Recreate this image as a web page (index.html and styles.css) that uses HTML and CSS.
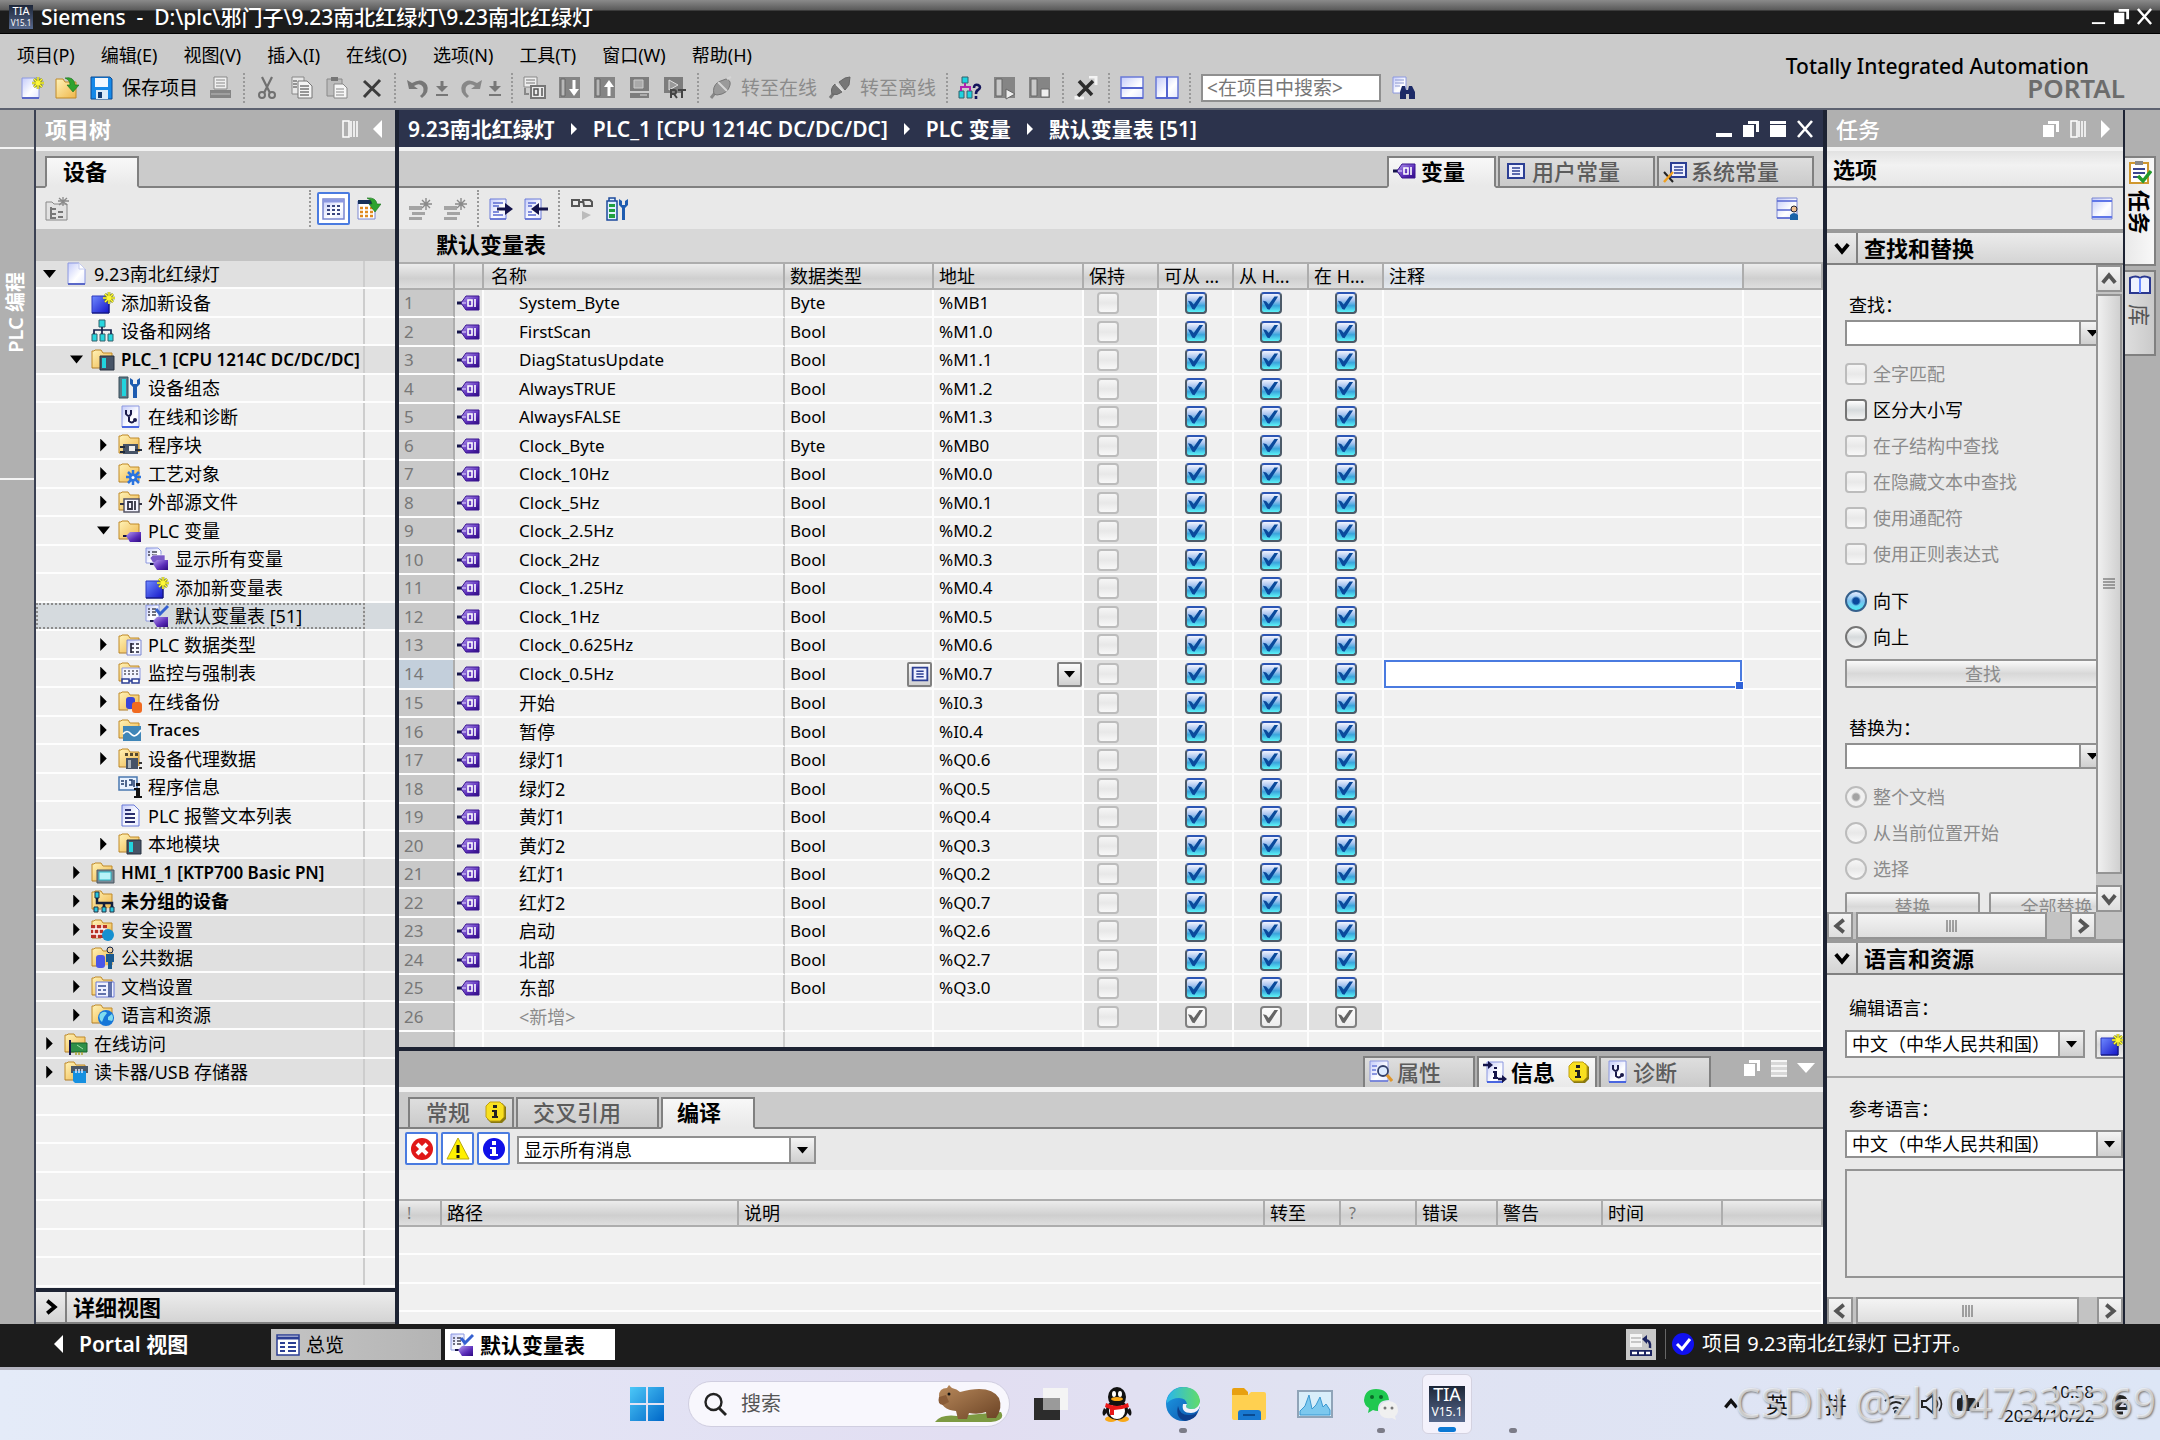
FILE: index.html
```html
<!DOCTYPE html>
<html lang="zh-CN">
<head>
<meta charset="utf-8">
<title>Siemens - 9.23南北红绿灯</title>
<link rel="stylesheet" href="styles.css">
</head>
<body>
<svg class="defs" width="0" height="0" aria-hidden="true">
  <defs>
    <linearGradient id="g-fold" x1="0" y1="0" x2="1" y2="1"><stop offset="0" stop-color="#fff3b8"/><stop offset="1" stop-color="#efb64a"/></linearGradient>
    <linearGradient id="g-page" x1="0" y1="0" x2="1" y2="1"><stop offset="0" stop-color="#c4cbfa"/><stop offset=".6" stop-color="#fff"/><stop offset="1" stop-color="#e4e8ff"/></linearGradient>
    <linearGradient id="g-blue" x1="0" y1="0" x2="1" y2="1"><stop offset="0" stop-color="#6f8bff"/><stop offset="1" stop-color="#1414c8"/></linearGradient>
    <linearGradient id="g-tag" x1="0" y1="0" x2="1" y2="1"><stop offset="0" stop-color="#b49af0"/><stop offset=".6" stop-color="#5a2cb8"/><stop offset="1" stop-color="#2d0a80"/></linearGradient>
    <linearGradient id="g-edge" x1="0" y1="0" x2="1" y2="1"><stop offset="0" stop-color="#1fa0e8"/><stop offset="1" stop-color="#0b4fa8"/></linearGradient>
    <linearGradient id="g-edge2" x1="0" y1="0" x2="1" y2="0"><stop offset="0" stop-color="#2ab6ea"/><stop offset="1" stop-color="#62dc6a"/></linearGradient>
    <linearGradient id="g-win" x1="0" y1="0" x2="1" y2="1"><stop offset="0" stop-color="#4cc8f8"/><stop offset="1" stop-color="#0067c8"/></linearGradient>
    <linearGradient id="g-bear" x1="0" y1="0" x2="1" y2="1"><stop offset="0" stop-color="#b98a5c"/><stop offset="1" stop-color="#6b4325"/></linearGradient>
  </defs>
  <symbol id="i-folder" viewBox="0 0 24 24"><path d="M1 20V3h2l1-1h6l2 3h9v14" fill="url(#g-fold)" stroke="#c08a28"/><path d="M1 20h9" stroke="#b07a20"/></symbol>
  <symbol id="i-star" viewBox="0 0 24 24"><path d="M18 1v12M12 7h12M14 3l8 8M22 3l-8 8" stroke="#6f7a10" stroke-width="2.600"/><path d="M18 1v12M12 7h12M14 3l8 8M22 3l-8 8" stroke="#fff83a" stroke-width="1.500"/></symbol>
  <symbol id="i-page" viewBox="0 0 24 24"><path d="M4 1h11l6 6v15H4z" fill="url(#g-page)" stroke="#8c98e0"/><path d="M15 1v6h6" fill="#fff" stroke="#c4cbf0"/><path d="M4 22h17" stroke="#5a68c8" stroke-width="2"/></symbol>
  <symbol id="i-newpage" viewBox="0 0 24 24"><path d="M2 2h17v20H2z" fill="url(#g-page)" stroke="#8c98e0"/><path d="M2 22h17" stroke="#5a68c8" stroke-width="2"/><use href="#i-star"/></symbol>
  <symbol id="i-open" viewBox="0 0 24 24"><path d="M1 22V3h7l2 3h11v16z" fill="url(#g-fold)" stroke="#c08a28"/><path d="M10 2q9-2 10 7h4l-6 7-6-7h3q0-5-5-7z" fill="#2fa32f" stroke="#17701a" stroke-width=".6"/></symbol>
  <symbol id="i-save" viewBox="0 0 24 24"><path d="M1 1h19l2 2v20H1z" fill="#1689e8" stroke="#0b4a94"/><path d="M5 2h13v9H5z" fill="#f2f8ff"/><path d="M6 14h12v9H6z" fill="#dcebf8"/><path d="M8 16h4v6H8z" fill="#123a70"/></symbol>
  <symbol id="i-print" viewBox="0 0 24 24"><path d="M5 1h13v12H5z" fill="#f0f0f0" stroke="#888"/><path d="M7 4h9M7 7h9M7 10h9" stroke="#888"/><path d="M1 14h21v8H1z" fill="#858585"/><path d="M2 18h19" stroke="#bbb"/></symbol>
  <symbol id="i-cut" viewBox="0 0 24 24"><path d="M7 1l8 16M17 1L9 17" stroke="#707070" stroke-width="2.200" fill="none"/><circle cx="7" cy="19" r="3" fill="none" stroke="#707070" stroke-width="2"/><circle cx="17" cy="19" r="3" fill="none" stroke="#707070" stroke-width="2"/></symbol>
  <symbol id="i-copy" viewBox="0 0 24 24"><path d="M2 1h12v17H2z" fill="#e8e8e8" stroke="#888"/><path d="M8 5h9l5 5v12H8z" fill="#f4f4f4" stroke="#777"/><path d="M10 10h9M10 13h9M10 16h9M10 19h9M3 5h4M3 8h4M3 11h4" stroke="#777" stroke-width="1.500"/></symbol>
  <symbol id="i-paste" viewBox="0 0 24 24"><path d="M2 3h15v17H2z" fill="#bcbcbc" stroke="#888"/><path d="M6 1h7v4H6z" fill="#777"/><path d="M9 8h9l4 4v10H9z" fill="#f6f6f6" stroke="#888"/><path d="M11 13h8M11 16h8M11 19h8" stroke="#888"/></symbol>
  <symbol id="i-x" viewBox="0 0 24 24"><path d="M4 5l16 15M20 4L4 21" stroke="#3c3c3c" stroke-width="3"/></symbol>
  <symbol id="i-undo" viewBox="0 0 24 24"><path d="M1 4l2 9 9 0-4-3q6-4 9 1 2 5-3 9l2 2q8-6 5-13-5-8-15-2z" fill="#777"/></symbol>
  <symbol id="i-redo" viewBox="0 0 24 24"><path d="M23 4l-2 9-9 0 4-3q-6-4-9 1-2 5 3 9l-2 2q-8-6-5-13 5-8 15-2z" fill="#888"/></symbol>
  <symbol id="i-pull" viewBox="0 0 12 24"><path d="M6 5v7" stroke="#777" stroke-width="3"/><path d="M0 10h12l-6 6z" fill="#777"/><path d="M0 19h12" stroke="#777" stroke-width="2"/></symbol>
  <symbol id="i-compile" viewBox="0 0 24 24"><path d="M1 1h13v10H1z" fill="#eee" stroke="#888"/><path d="M3 4h9M3 7h9" stroke="#777"/><path d="M8 10h14v12H8z" fill="#ececec" stroke="#777" stroke-width="2"/><path d="M11 13h4v6h-4zM19 12v8" fill="none" stroke="#555" stroke-width="1.500"/><path d="M2 12v6h4" stroke="#888" fill="none" stroke-width="2"/></symbol>
  <symbol id="i-down" viewBox="0 0 24 24"><path d="M1 1h21v21H1z" fill="#858585"/><path d="M3 3h4v17H3z" fill="#b8b8b8" stroke="#666"/><path d="M16 4v12" stroke="#fff" stroke-width="3"/><path d="M11 13h10l-5 7z" fill="#fff"/></symbol>
  <symbol id="i-up" viewBox="0 0 24 24"><path d="M1 1h21v21H1z" fill="#858585"/><path d="M3 3h4v17H3z" fill="#b8b8b8" stroke="#666"/><path d="M16 8v12" stroke="#fff" stroke-width="3"/><path d="M11 11h10l-5-7z" fill="#fff"/></symbol>
  <symbol id="i-pc" viewBox="0 0 24 24"><path d="M2 1h19v14H2zM2 17h19v5H2z" fill="#7d7d7d"/><path d="M6 4h9v8H6z" fill="#aaa" stroke="#ccc"/><path d="M12 19h7" stroke="#ddd"/></symbol>
  <symbol id="i-rt" viewBox="0 0 24 24"><path d="M1 1h19v16H1z" fill="#7d7d7d"/><path d="M6 4l9 5-9 5z" fill="#999" stroke="#ddd"/><path d="M8 22v-8h3q2 0 2 2t-2 2H8M11 18l3 4M15 14h8M19 14v8" stroke="#444" stroke-width="2" fill="none"/></symbol>
  <symbol id="i-plug" viewBox="0 0 24 24"><path d="M2 22l4-5" stroke="#888" stroke-width="3"/><path d="M5 18q-2-7 4-12l8-3q5 1 4 6-2 9-13 10z" fill="#9a9a9a" stroke="#777"/><path d="M9 6l9 9M18 3l4-2" stroke="#d5d5d5" stroke-width="2"/></symbol>
  <symbol id="i-unplug" viewBox="0 0 24 24"><path d="M2 22l4-5" stroke="#777" stroke-width="3"/><path d="M4 18q-2-6 3-10l7 8q-5 4-10 2zM11 6l6-4 5-1-1 8-4 5z" fill="#777" stroke="#666"/><path d="M8 8l7 7" stroke="#ddd" stroke-width="2"/></symbol>
  <symbol id="i-netq" viewBox="0 0 24 24"><path d="M4 1h6v6H4zM1 15h5v7H1zM9 15h5v7H9z" fill="#1fd3e0" stroke="#30606a"/><path d="M7 7v4M3 15v-4h9v4" stroke="#b020b0" stroke-width="2" fill="none"/><path d="M16 12q0-4 4-3 4 2 0 5-2 1-2 4M18 20v3" stroke="#14145a" stroke-width="2.600" fill="none"/></symbol>
  <symbol id="i-run" viewBox="0 0 24 24"><path d="M1 1h21v21H1z" fill="#858585"/><path d="M3 3h6v17H3z" fill="#c8c8c8" stroke="#666"/><path d="M13 13l9 5-9 5z" fill="#eee" stroke="#666"/></symbol>
  <symbol id="i-stop" viewBox="0 0 24 24"><path d="M1 1h21v21H1z" fill="#858585"/><path d="M3 3h6v17H3z" fill="#c8c8c8" stroke="#666"/><path d="M13 13h8v8h-8z" fill="#eee" stroke="#666"/></symbol>
  <symbol id="i-xwin" viewBox="0 0 24 24"><path d="M15 1h7v8M2 20v2h8" stroke="#f4f4f4" stroke-width="3" fill="none"/><path d="M5 5l13 14M19 5L4 20" stroke="#2c2c2c" stroke-width="3.500"/></symbol>
  <symbol id="i-hsplit" viewBox="0 0 24 24"><path d="M1 1h22v21H1z" fill="url(#g-page)" stroke="#6a7ad8" stroke-width="1.500"/><path d="M1 12h22M1 22h22" stroke="#5566d0" stroke-width="2"/></symbol>
  <symbol id="i-vsplit" viewBox="0 0 24 24"><path d="M1 1h22v21H1z" fill="url(#g-page)" stroke="#6a7ad8" stroke-width="1.500"/><path d="M12 1v21M1 22h22" stroke="#5566d0" stroke-width="2"/></symbol>
  <symbol id="i-find" viewBox="0 0 24 24"><path d="M1 1h13v16H1z" fill="url(#g-page)" stroke="#8c98e0"/><path d="M3 4h9M3 7h9M3 10h5" stroke="#8c98d0"/><path d="M8 23v-7l2-6h3l1 4h2l1-4h3l3 6v7h-6v-5h-3v5z" fill="#1c2a66"/></symbol>
  <symbol id="i-restore" viewBox="0 0 18 18"><path d="M6 1h11v11h-3V4H6z" fill="currentColor"/><path d="M1 5h11v12H1z" fill="currentColor"/></symbol>
  <symbol id="i-min" viewBox="0 0 18 18"><path d="M1 13h16v4H1z" fill="currentColor"/></symbol>
  <symbol id="i-thin" viewBox="0 0 18 18"><path d="M2 15h14v2H2z" fill="currentColor"/></symbol>
  <symbol id="i-max" viewBox="0 0 18 18"><path d="M1 1h16v3H1zM1 5h16v12H1z" fill="currentColor"/></symbol>
  <symbol id="i-close" viewBox="0 0 18 18"><path d="M2 1l14 16M16 1L2 17" stroke="currentColor" stroke-width="2.600"/></symbol>
  <symbol id="i-cols" viewBox="0 0 18 18"><path d="M2 1h6v16H2z" fill="none" stroke="currentColor" stroke-width="1.500"/><path d="M10 1v16M13 1v16M16 1v16" stroke="currentColor" stroke-width="1.500"/></symbol>
  <symbol id="i-list" viewBox="0 0 18 18"><path d="M1 1h16v16H1z" fill="currentColor" opacity=".5"/><path d="M1 2h16M1 7h16M1 12h16M1 17h16" fill="none" stroke="currentColor" stroke-width="1.500"/></symbol>
  <symbol id="i-left" viewBox="0 0 18 18"><path d="M14 0v18L5 9z" fill="currentColor"/></symbol>
  <symbol id="i-right" viewBox="0 0 18 18"><path d="M5 0v18l9-9z" fill="currentColor"/></symbol>
  <symbol id="i-tri" viewBox="0 0 18 18"><path d="M0 4h18l-9 10z" fill="currentColor"/></symbol>
  <symbol id="i-crumb" viewBox="0 0 8 12"><path d="M1 0v12l6-6z" fill="currentColor"/></symbol>
  <symbol id="i-chev" viewBox="0 0 16 16"><path d="M3 5l5 6 5-6" fill="none" stroke="currentColor" stroke-width="3"/></symbol>
  <symbol id="i-grip" viewBox="0 0 14 14"><path d="M2 1v12M5 1v12M8 1v12M11 1v12" stroke="#555"/></symbol>
  <symbol id="i-group" viewBox="0 0 24 24"><path d="M1 23V5h6l2 2h13v16z" fill="#e2e2e2" stroke="#888"/><path d="M6 12h5M6 17h5M6 21h5M6 10v12M13 15h5M13 20h5" stroke="#777" stroke-width="2"/><path d="M18 0v9M13 4h11M14 1l8 7M22 1l-8 7" stroke="#8a8a8a" stroke-width="1.300"/></symbol>
  <symbol id="i-grid" viewBox="0 0 24 24"><path d="M1 2h21v20H1z" fill="url(#g-page)" stroke="#7a86d0" stroke-width="1.500"/><path d="M1 4h21" stroke="#8c98e0" stroke-width="3"/><path d="M5 9h3M10 9h3M15 9h3M5 13h3M10 13h3M15 13h3M5 17h3M10 17h3M15 17h3" stroke="#3a4680" stroke-width="2"/></symbol>
  <symbol id="i-gridgo" viewBox="0 0 24 24"><path d="M1 4h17v18H1z" fill="#fff" stroke="#7a86d0"/><path d="M1 5h17" stroke="#16305a" stroke-width="4"/><path d="M3 11h3M8 11h3M13 11h3M3 15h3M8 15h3M13 15h3M3 19h3M8 19h3M13 19h3" stroke="#e08a20" stroke-width="2.500"/><path d="M10 1q9-1 10 6h4l-6 8-6-8h3q0-4-5-6z" fill="#2fa32f" stroke="#17701a" stroke-width=".6"/></symbol>
  <symbol id="i-addrow" viewBox="0 0 24 24"><path d="M1 9h13v4H1zM4 15h13v3H4zM1 20h13v3H1z" fill="#a4a4a4"/><path d="M18 1v12M12 7h12M14 3l8 8M22 3l-8 8" stroke="#8a8a8a" stroke-width="1.400"/></symbol>
  <symbol id="i-export" viewBox="0 0 24 24"><path d="M1 2h16v20H1z" fill="url(#g-page)" stroke="#6a7ad8"/><path d="M4 6h10M4 9h6M4 15h6M4 18h10M1 22h16" stroke="#5a6ad0" stroke-width="1.500"/><path d="M8 12h9" stroke="#14144a" stroke-width="3"/><path d="M16 6l8 6-8 6z" fill="#14144a"/></symbol>
  <symbol id="i-import" viewBox="0 0 24 24"><path d="M1 2h16v20H1z" fill="url(#g-page)" stroke="#6a7ad8"/><path d="M4 6h8M4 9h4M4 15h4M4 18h8M1 22h16" stroke="#5a6ad0" stroke-width="1.500"/><path d="M14 12h10" stroke="#14144a" stroke-width="3"/><path d="M15 6l-8 6 8 6z" fill="#14144a"/></symbol>
  <symbol id="i-glasses" viewBox="0 0 24 24"><path d="M2 3h7v6H2zM13 3h7l2 2v4h-8zM9 5h4" fill="none" stroke="#555" stroke-width="2"/><path d="M12 14l9 4-9 5z" fill="#bbb"/></symbol>
  <symbol id="i-retain" viewBox="0 0 24 24"><path d="M4 1h6v3H4zM2 4h10v19H2z" fill="#dff0ff" stroke="#1c4a9c" stroke-width="1.500"/><path d="M4 7h6v3H4zM4 12h6v3H4zM4 17h6v4H4z" fill="#20a040"/><path d="M14 2v6l3 3v12h3V11l3-3V2l-3 2v4h-3V4z" fill="#1e5cb0"/></symbol>
  <symbol id="i-userview" viewBox="0 0 24 24"><path d="M1 1h20v20H1z" fill="url(#g-page)" stroke="#7a86d0"/><path d="M1 4h20M1 13h20M1 21h20" stroke="#5566d0" stroke-width="1.500"/><circle cx="18" cy="12" r="3" fill="#f0c090" stroke="#223"/><path d="M14 23v-5q4-4 8 0v5z" fill="#1a62a8"/></symbol>
  <symbol id="i-tag" viewBox="0 0 24 24"><path d="M0 12h5" stroke="#14144a" stroke-width="3"/><path d="M4 12l5-7h13v14H9z" fill="url(#g-tag)" stroke="#3a1590"/><path d="M11 9h4v6h-4zM18 8v8" fill="none" stroke="#fff" stroke-width="1.600"/><path d="M5 12h4" stroke="#e8e0ff"/></symbol>
  <symbol id="i-const" viewBox="0 0 24 24"><path d="M4 5h16v14H4z" fill="#eef0ff" stroke="#2c3f94" stroke-width="2"/><path d="M8 9h8M8 12h8M8 15h8" stroke="#2c3f94" stroke-width="1.500"/></symbol>
  <symbol id="i-sysconst" viewBox="0 0 24 24"><path d="M8 4h15v14H8z" fill="#eef0ff" stroke="#2c3f94" stroke-width="2"/><path d="M11 8h9M11 11h9M11 14h9" stroke="#2c3f94" stroke-width="1.500"/><path d="M1 13l9 10" stroke="#222" stroke-width="2"/><path d="M10 13L1 23" stroke="#f0a020" stroke-width="2.500"/></symbol>
  <symbol id="i-add" viewBox="0 0 24 24"><path d="M1 5h17v17H1z" fill="url(#g-blue)" stroke="#2a36c0"/><path d="M1 22h17V8" fill="none" stroke="#0a0a6a"/><use href="#i-star"/></symbol>
  <symbol id="i-net" viewBox="0 0 24 24"><path d="M8 1h6v7H8zM1 15h5v7H1zM9 15h5v7H9zM17 15h5v7h-5z" fill="#27d6df" stroke="#33606a"/><path d="M11 8v7M3 15v-4h17v4" stroke="#14204a" stroke-width="1.700" fill="none"/></symbol>
  <symbol id="i-plc" viewBox="0 0 24 24"><path d="M9 8h14v14H9z" fill="#465366" stroke="#27303e"/><path d="M11 10h4v10h-4z" fill="#22d4de"/></symbol>
  <symbol id="i-config" viewBox="0 0 24 24"><path d="M1 1h9v21H1z" fill="#5a7a88" stroke="#3a4c58"/><path d="M4 3h4v17H4z" fill="#22d4de"/><path d="M12 2v6l3 3v11h4V11l3-3V2l-3 2v4h-4V4z" fill="#1e5cb0"/></symbol>
  <symbol id="i-diag" viewBox="0 0 24 24"><path d="M4 1h17v21H4z" fill="url(#g-page)" stroke="#8c98e0"/><path d="M4 22h17" stroke="#4a66e0" stroke-width="2"/><path d="M8 5v4q3 4 5 0V5M11 11v5q3 3 5 0" stroke="#1a1a4a" stroke-width="2" fill="none"/><circle cx="17" cy="15" r="2" fill="#1a1a4a"/></symbol>
  <symbol id="o-block" viewBox="0 0 24 24"><path d="M5 11h15v10H5z" fill="#465366"/><path d="M11 13h6v5h-6z" fill="#eee"/><path d="M2 14h5M2 19h5M17 17h7" stroke="#222b3a" stroke-width="2"/></symbol>
  <symbol id="o-gear" viewBox="0 0 24 24"><path d="M15 8v15M8 15h15M10 10l11 11M21 10L10 21" stroke="#2a74e0" stroke-width="2.500"/><circle cx="15" cy="15.500" r="4" fill="#2a74e0"/><circle cx="15" cy="15.500" r="1.500" fill="#fff"/></symbol>
  <symbol id="o-src" viewBox="0 0 24 24"><path d="M6 9h15v13H6z" fill="#f4f4ff" stroke="#556" stroke-width="1.500"/><path d="M10 12h4v7h-4zM17 11v9M2 14h4M21 14h3" stroke="#334" stroke-width="1.800" fill="none"/></symbol>
  <symbol id="o-tag" viewBox="0 0 24 24"><path d="M5 17h4" stroke="#14144a" stroke-width="2"/><path d="M8 17l4-4h11v10H12z" fill="url(#g-tag)"/></symbol>
  <symbol id="i-tags" viewBox="0 0 24 24"><path d="M1 1h12l3 3v12H1z" fill="url(#g-page)" stroke="#8c98e0"/><path d="M3 5h2M7 5h5M3 8h2M7 8h5" stroke="#445" stroke-width="1.500"/><path d="M5 11l3-3h12v8H8z" fill="#7a5ac8" stroke="#fff" stroke-width=".6"/><use href="#o-tag"/></symbol>
  <symbol id="i-tagok" viewBox="0 0 24 24"><path d="M1 1h13v16H1z" fill="url(#g-page)" stroke="#8c98e0"/><path d="M3 5h2M7 5h4M3 8h2M7 8h4M3 11h2M7 11h4" stroke="#445" stroke-width="1.500"/><path d="M11 5l4 5 8-8" stroke="#3560d0" stroke-width="3" fill="none"/><use href="#o-tag"/></symbol>
  <symbol id="o-type" viewBox="0 0 24 24"><path d="M9 7h14v15H9z" fill="url(#g-page)" stroke="#7a86d0"/><path d="M13 10v10M13 11h3M13 15h3M13 19h3M18 11h3M18 15h3M18 19h3" stroke="#223" stroke-width="1.700"/></symbol>
  <symbol id="o-watch" viewBox="0 0 24 24"><path d="M4 7h18v12H4z" fill="#f2f4ff" stroke="#8c98e0"/><path d="M6 10h14M6 13h14" stroke="#556" stroke-width="1.500" stroke-dasharray="2 2"/><path d="M4 18h7v4H4zM14 18h7v4h-7zM11 20h3" fill="#fff" stroke="#2c3f94" stroke-width="1.500"/></symbol>
  <symbol id="o-backup" viewBox="0 0 24 24"><rect x="8" y="7" width="9" height="12" rx="3" fill="#3a46d8"/><rect x="14" y="12" width="10" height="11" rx="3" fill="#f06a20"/></symbol>
  <symbol id="o-trace" viewBox="0 0 24 24"><path d="M5 8h18v15H5z" fill="#3f86b8"/><path d="M5 16q4-5 8 0t10-4" stroke="#fff" stroke-width="1.700" fill="none"/></symbol>
  <symbol id="o-proxy" viewBox="0 0 24 24"><path d="M7 6h3v3H7zM12 6h3v3h-3zM17 6h3v3h-3z" fill="#554a30"/><path d="M8 11h12v11H8z" fill="#465366"/><path d="M10 13h3v8h-3z" fill="#a8b0b8"/><path d="M21 16h3M21 21h3" stroke="#333" stroke-width="2"/></symbol>
  <symbol id="i-info" viewBox="0 0 24 24"><path d="M1 2h18v13H1z" fill="#e8f2ff" stroke="#4a78b0" stroke-width="1.500"/><path d="M3 6h3M3 9h3M8 5v7M11 5h3v5h-3M16 5v7" stroke="#1c3a6a" stroke-width="1.500" fill="none"/><path d="M18 8h4v3h-4zM16 13h6v8h2v2h-8v-2h2v-6h-2z" fill="#111"/></symbol>
  <symbol id="i-text" viewBox="0 0 24 24"><path d="M4 1h12l5 5v16H4z" fill="url(#g-page)" stroke="#6a7ad8"/><path d="M7 6h6M7 10h10M7 14h10M7 18h10" stroke="#2c3070" stroke-width="1.800"/></symbol>
  <symbol id="o-hmi" viewBox="0 0 24 24"><path d="M6 9h17v13H6z" fill="#788894" stroke="#4a5660"/><path d="M8 11h12v8H8z" fill="#b8f2f8" stroke="#2ab8c8"/></symbol>
  <symbol id="o-ungr" viewBox="0 0 24 24"><path d="M4 3h4v6H4zM3 18h4v5H3zM11 18h4v5h-4zM19 18h4v5h-4z" fill="#27c6df" stroke="#234"/><path d="M6 9v5h15v4M13 14v4" stroke="#141e3a" stroke-width="2.500" fill="none"/></symbol>
  <symbol id="o-sec" viewBox="0 0 24 24"><path d="M0 7h16v13H0z" fill="#b83226"/><path d="M0 11h16M0 16h16M5 7v4M11 7v4M3 11v5M8 11v5M13 11v5M6 16v4" stroke="#fff" stroke-width="1.500"/><circle cx="17" cy="17" r="6" fill="#1690d0"/></symbol>
  <symbol id="o-pub" viewBox="0 0 24 24"><rect x="5" y="9" width="9" height="13" rx="3" fill="#4a56e8"/><circle cx="19" cy="4" r="3" fill="#f0d0a0" stroke="#124"/><path d="M15 8h8v8h-2v7h-4v-7h-2z" fill="#1a5a90"/></symbol>
  <symbol id="o-doc" viewBox="0 0 24 24"><path d="M5 7h18v15H5z" fill="#f0f2ff" stroke="#6a7ad8"/><path d="M7 11h8M7 15h3M12 15h3M7 19h8M18 7v15M20 7v15" stroke="#334a90" stroke-width="1.500"/></symbol>
  <symbol id="o-lang" viewBox="0 0 24 24"><circle cx="15" cy="15" r="8" fill="#1676d8"/><path d="M9 11q4-4 7-1l-3 4-2 5q-4-3-2-8zM17 14l4-3q2 4 0 7l-4-1z" fill="#7fdcf0"/></symbol>
  <symbol id="o-net2" viewBox="0 0 24 24"><path d="M6 11h17v9H6z" fill="#2f9048" stroke="#17602c"/><path d="M6 8v15" stroke="#14144a" stroke-width="2"/><path d="M12 20v3M15 20v3M18 20v3" stroke="#a8a030" stroke-width="1.500"/><path d="M13 13l6 4" stroke="#9fe0a8"/></symbol>
  <symbol id="o-card" viewBox="0 0 24 24"><path d="M7 6h17v7H7z" fill="#4a5666"/><path d="M9 11h13v12H11l-2-2z" fill="#1690e0"/><path d="M12 9v4M15 9v4M18 9v4" stroke="#e0e8ff" stroke-width="1.500"/></symbol>
  <symbol id="i-panel" viewBox="0 0 24 24"><path d="M2 1h20v21H2z" fill="url(#g-page)" stroke="#7a86d0"/><path d="M2 4h20M2 20h20" stroke="#5f76e8" stroke-width="2"/></symbol>
  <symbol id="i-task" viewBox="0 0 24 24"><path d="M2 3h18v20H2z" fill="#fff" stroke="#d09830" stroke-width="2"/><path d="M7 1h8v4H7z" fill="#888"/><path d="M5 9h12M5 13h12M5 17h8" stroke="#3a4690" stroke-width="1.800"/><path d="M10 16l5 5 8-10" stroke="#249a2c" stroke-width="3.500" fill="none"/></symbol>
  <symbol id="i-book" viewBox="0 0 24 24"><path d="M2 4q6-3 10 0 4-3 10 0v15H2z" fill="#eef2ff" stroke="#2a3890" stroke-width="2"/><path d="M12 4v15" stroke="#6a8aff" stroke-width="2"/></symbol>
  <symbol id="i-prop" viewBox="0 0 24 24"><path d="M1 1h18v20H1z" fill="url(#g-page)" stroke="#8c98e0"/><path d="M3 6h5M3 10h4M3 14h5M1 21h18" stroke="#6a7ad8" stroke-width="1.500"/><circle cx="14" cy="11" r="5" fill="#dceaff" stroke="#33406a" stroke-width="1.800"/><path d="M18 15l5 6" stroke="#e0962a" stroke-width="3"/></symbol>
  <symbol id="i-msg" viewBox="0 0 24 24"><path d="M4 2h16v20H4z" fill="url(#g-page)" stroke="#8c98e0"/><path d="M4 22h16" stroke="#4a66e0" stroke-width="2"/><path d="M0 5h6M15 19h6" stroke="#14144a" stroke-width="2.500"/><path d="M5 1l5 4-5 4zM19 15l5 4-5 4z" fill="#14144a"/><path d="M11 7h3v2h-3zM10 11h4v6h1v2h-5v-2h1v-4h-1z" fill="#14144a"/></symbol>
  <symbol id="i-ybadge" viewBox="0 0 24 24"><path d="M7 3h11l4 4v12l-4 4H7l-4-4V7z" fill="#8a7a10"/><path d="M6 2h10l4 4v11l-4 4H6l-4-4V6z" fill="#f8e020" stroke="#c0a010"/><path d="M9 5h4v3H9zM8 10h5v6h1v2H8v-2h2v-4H8z" fill="#222"/></symbol>
  <symbol id="i-err" viewBox="0 0 24 24"><circle cx="12" cy="12" r="11" fill="#e01818"/><path d="M7 7l10 10M17 7L7 17" stroke="#fff" stroke-width="4"/></symbol>
  <symbol id="i-warn" viewBox="0 0 24 24"><path d="M12 1l11 21H1z" fill="#fff000" stroke="#b8a810"/><path d="M12 8v8M12 18v3" stroke="#111" stroke-width="3"/></symbol>
  <symbol id="i-blueinfo" viewBox="0 0 24 24"><circle cx="12" cy="12" r="11" fill="#1010e8"/><path d="M10 4h4v4h-4zM8 10h6v7h2v2H8v-2h2v-5H8z" fill="#fff"/></symbol>
  <symbol id="i-over" viewBox="0 0 24 24"><path d="M1 2h22v20H1z" fill="#fff" stroke="#2c3f94" stroke-width="1.500"/><path d="M1 5h22" stroke="#2c3f94" stroke-width="3"/><path d="M4 10h5M4 14h5M4 18h5M12 10h8M12 14h8M12 18h8" stroke="#2c3f94" stroke-width="2"/></symbol>
  <symbol id="i-tray" viewBox="0 0 24 24"><path d="M1 1h12v13H1z" fill="#f4f4f4"/><path d="M2 5h10M2 9h10" stroke="#999"/><path d="M1 17h22v6H1z" fill="#1c2460"/><path d="M3 20h5M10 20h5M17 20h4" stroke="#fff" stroke-width="2.500"/><path d="M21 15q1-8-5-8" stroke="#1c2460" stroke-width="2.500" fill="none"/><path d="M18 2v9l-5-5z" fill="#1c2460"/></symbol>
  <symbol id="i-okball" viewBox="0 0 24 24"><circle cx="12" cy="12" r="11" fill="#1010f0"/><path d="M6 12l5 5 8-10" stroke="#fff" stroke-width="3" fill="none"/></symbol>
  <symbol id="i-win" viewBox="0 0 36 36"><path d="M1 1h16v16H1zM19 1h16v16H19zM1 19h16v16H1zM19 19h16v16H19z" fill="url(#g-win)"/></symbol>
  <symbol id="i-mag" viewBox="0 0 24 24"><circle cx="10.500" cy="10" r="8" fill="none" stroke="#222" stroke-width="2.400"/><path d="M16 16l7 7" stroke="#222" stroke-width="2.800"/></symbol>
  <symbol id="i-bear" viewBox="0 0 72 40"><path d="M2 38q6-8 22-6l44-4q5 8-10 10z" fill="#7d9a42"/><path d="M6 12q0-8 8-8l2-3 3 3q5 1 8 4 30-8 39 6 4 10-3 20H54l-1-6q-8 3-17 1l-2 6h-9l-2-8Q8 26 6 12z" fill="url(#g-bear)"/><path d="M6 13q-2 7 4 8l6-3-3-7z" fill="#8a5c38"/><circle cx="16" cy="10" r="1.500" fill="#111"/></symbol>
  <symbol id="i-tview" viewBox="0 0 36 36"><path d="M1 12h26v22H1z" fill="#2c2c2c"/><path d="M10 2h25v22H10z" fill="#f4f4f4"/><path d="M10 12h17v12H10z" fill="#9a9a9a"/></symbol>
  <symbol id="i-qq" viewBox="0 0 36 36"><path d="M5 22q-3 6 0 8l4-5zM31 22q3 6 0 8l-4-5z" fill="#111"/><ellipse cx="12" cy="33" rx="6" ry="3" fill="#f8a818"/><ellipse cx="24" cy="33" rx="6" ry="3" fill="#f8a818"/><ellipse cx="18" cy="24" rx="11" ry="10" fill="#111"/><ellipse cx="18" cy="25" rx="8" ry="8" fill="#fff"/><ellipse cx="18" cy="11" rx="9" ry="10" fill="#111"/><ellipse cx="15" cy="8" rx="2" ry="3" fill="#fff"/><ellipse cx="21" cy="8" rx="2" ry="3" fill="#fff"/><ellipse cx="18" cy="13" rx="6" ry="2" fill="#f8a818"/><path d="M7 17q11 6 22 0l1 4q-8 3-15 3v5h-4v-6l-5-2z" fill="#e81818"/></symbol>
  <symbol id="i-edge" viewBox="0 0 36 36"><circle cx="18" cy="18" r="17" fill="url(#g-edge)"/><path d="M2 13Q7 1 19 1q15 1 16 15-1 8-10 7-6-1-3-5-1-6-8-6-7 0-12 5z" fill="url(#g-edge2)"/><path d="M13 20q2 10 12 9 5 0 8-3-3 8-13 9-10-3-7-15z" fill="#0d3f8c"/><path d="M22 18q-3 4 3 5 8 1 10-7v4q-2 7-9 7-10 0-8-9z" fill="#f2f2fa"/></symbol>
  <symbol id="i-files" viewBox="0 0 36 36"><path d="M1 4q0-2 2-2h10l4 4v8H1z" fill="#e8a010"/><path d="M1 9h16l3-3h13q2 0 2 2v24q0 2-2 2H3q-2 0-2-2z" fill="#ffd050"/><path d="M7 34v-7q0-3 3-3h17q3 0 3 3v7z" fill="#1878d0"/><path d="M12 29h12" stroke="#0a4a90" stroke-width="2"/></symbol>
  <symbol id="i-mon" viewBox="0 0 36 36"><path d="M1 5h34v26H1z" fill="#d8eefa" stroke="#90a4b8" stroke-width="2"/><path d="M3 25l5-5 4-11 3 14 4-4 4-8 3 10 3-3 4 6v5H3z" fill="#7cc8ee" stroke="#3a98d0"/></symbol>
  <symbol id="i-wechat" viewBox="0 0 36 36"><path d="M13 3q12 0 13 11-12 0-11 11-3 0-5-1l-5 3 1-5Q1 19 1 14 2 3 13 3z" fill="#20c850"/><circle cx="9" cy="11" r="2" fill="#0a6a28"/><circle cx="18" cy="11" r="2" fill="#0a6a28"/><path d="M26 15q9 1 9 9 0 4-3 6l1 4-4-2q-12 2-13-8 1-8 10-9z" fill="#f0f0f0"/><circle cx="22" cy="22" r="1.500" fill="#777"/><circle cx="29" cy="22" r="1.500" fill="#777"/></symbol>
  <symbol id="i-wifi" viewBox="0 0 24 24"><path d="M1 9q11-9 22 0M5 13q7-6 14 0M9 17q3-3 6 0" fill="none" stroke="#222" stroke-width="2"/><circle cx="12" cy="20" r="2" fill="#222"/></symbol>
  <symbol id="i-vol" viewBox="0 0 24 24"><path d="M2 9h4l7-6v18l-7-6H2z" fill="none" stroke="#222" stroke-width="2"/><path d="M16 8q3 4 0 8M19 5q5 7 0 14" fill="none" stroke="#222" stroke-width="1.600"/></symbol>
  <symbol id="i-bat" viewBox="0 0 24 24"><rect x="1" y="6" width="19" height="13" rx="3" fill="#222"/><path d="M21 10h2v5h-2z" fill="#222"/><path d="M6 3v6h5V3" stroke="#222" stroke-width="2" fill="#dde"/></symbol>
  <symbol id="i-bell" viewBox="0 0 24 24"><path d="M4 18V10q1-7 8-7t8 7v8z" fill="#222"/><path d="M9 21h6" stroke="#222" stroke-width="3"/><path d="M13 8h5l-5 6h5" stroke="#dde" stroke-width="2" fill="none"/></symbol>
</svg>

<header class="titlebar">
  <span class="tia tia-small">TIA<br>V15.1</span>
  <h1>Siemens&nbsp; -&nbsp; D:\plc\邪门子\9.23南北红绿灯\9.23南北红绿灯</h1>
  <div class="winbtns">
    <button aria-label="最小化"><svg class="wb"><use href="#i-thin"/></svg></button>
    <button aria-label="还原"><svg class="wb"><use href="#i-restore"/></svg></button>
    <button aria-label="关闭"><svg class="wb"><use href="#i-close"/></svg></button>
  </div>
</header>

<div class="ribbon">
  <div class="ribbon-left">
    <nav class="menu">
      <a href="#">项目(P)</a><a href="#">编辑(E)</a><a href="#">视图(V)</a><a href="#">插入(I)</a><a href="#">在线(O)</a><a href="#">选项(N)</a><a href="#">工具(T)</a><a href="#">窗口(W)</a><a href="#">帮助(H)</a>
    </nav>
    <div class="toolbar main-tools">
      <button aria-label="新建"><svg class="ic"><use href="#i-newpage"/></svg></button>
      <button aria-label="打开"><svg class="ic"><use href="#i-open"/></svg></button>
      <button><svg class="ic"><use href="#i-save"/></svg>保存项目</button>
      <button aria-label="打印"><svg class="ic"><use href="#i-print"/></svg></button>
      <i class="sep"></i>
      <button aria-label="剪切"><svg class="ic"><use href="#i-cut"/></svg></button>
      <button aria-label="复制"><svg class="ic"><use href="#i-copy"/></svg></button>
      <button aria-label="粘贴"><svg class="ic"><use href="#i-paste"/></svg></button>
      <button aria-label="删除"><svg class="ic"><use href="#i-x"/></svg></button>
      <i class="sep"></i>
      <button aria-label="撤销" class="split"><svg class="ic"><use href="#i-undo"/></svg><svg class="half"><use href="#i-pull"/></svg></button>
      <button aria-label="重做" class="split"><svg class="ic"><use href="#i-redo"/></svg><svg class="half"><use href="#i-pull"/></svg></button>
      <i class="sep"></i>
      <button aria-label="编译"><svg class="ic"><use href="#i-compile"/></svg></button>
      <button aria-label="下载"><svg class="ic"><use href="#i-down"/></svg></button>
      <button aria-label="上传"><svg class="ic"><use href="#i-up"/></svg></button>
      <button aria-label="仿真"><svg class="ic"><use href="#i-pc"/></svg></button>
      <button aria-label="运行系统"><svg class="ic"><use href="#i-rt"/></svg></button>
      <i class="sep"></i>
      <button class="off"><svg class="ic"><use href="#i-plug"/></svg>转至在线</button>
      <button class="off"><svg class="ic"><use href="#i-unplug"/></svg>转至离线</button>
      <i class="sep"></i>
      <button aria-label="可访问的设备"><svg class="ic"><use href="#i-netq"/></svg></button>
      <button aria-label="启动 CPU"><svg class="ic"><use href="#i-run"/></svg></button>
      <button aria-label="停止 CPU"><svg class="ic"><use href="#i-stop"/></svg></button>
      <i class="sep"></i>
      <button aria-label="交叉引用"><svg class="ic"><use href="#i-xwin"/></svg></button>
      <i class="sep"></i>
      <button aria-label="水平拆分"><svg class="ic"><use href="#i-hsplit"/></svg></button>
      <button aria-label="垂直拆分"><svg class="ic"><use href="#i-vsplit"/></svg></button>
      <i class="sep"></i>
      <input class="search" type="text" placeholder="&lt;在项目中搜索&gt;" aria-label="在项目中搜索">
      <button aria-label="搜索"><svg class="ic"><use href="#i-find"/></svg></button>
    </div>
  </div>
  <div class="brand"><span>Totally Integrated Automation</span><b>PORTAL</b></div>
</div>

<main class="work">
  <aside class="rail rail-left"><span>PLC 编程</span></aside>

  <section class="panel tree-panel">
    <header class="panel-head gray"><h2>项目树</h2>
      <svg class="wb"><use href="#i-cols"/></svg><svg class="wb"><use href="#i-left"/></svg></header>
    <div class="tabs"><button class="tab on">设备</button></div>
    <div class="toolbar tree-tools">
      <button aria-label="新建组"><svg class="ic"><use href="#i-group"/></svg></button>
      <span class="grow"></span><i class="sep"></i>
      <button class="pressed" aria-label="列表"><svg class="ic"><use href="#i-grid"/></svg></button>
      <button aria-label="转到"><svg class="ic"><use href="#i-gridgo"/></svg></button>
    </div>
    <div class="tree-cap"></div>
    <ul class="tree" id="tree"></ul>
    <div class="fold detail"><button aria-label="展开"><svg class="chev side"><use href="#i-chev"/></svg></button><h3>详细视图</h3></div>
  </section>

  <section class="center">
    <div class="editor">
      <header class="panel-head navy">
        <h2>9.23南北红绿灯<svg><use href="#i-crumb"/></svg>PLC_1 [CPU 1214C DC/DC/DC]<svg><use href="#i-crumb"/></svg>PLC 变量<svg><use href="#i-crumb"/></svg>默认变量表 [51]</h2>
        <svg class="wb"><use href="#i-min"/></svg><svg class="wb"><use href="#i-restore"/></svg><svg class="wb"><use href="#i-max"/></svg><svg class="wb"><use href="#i-close"/></svg>
      </header>
      <div class="tabs end">
        <button class="tab on t-var"><svg class="ic"><use href="#i-tag"/></svg>变量</button>
        <button class="tab t-const"><svg class="ic"><use href="#i-const"/></svg>用户常量</button>
        <button class="tab t-const"><svg class="ic"><use href="#i-sysconst"/></svg>系统常量</button>
      </div>
      <div class="toolbar edit-tools">
        <button aria-label="插入行"><svg class="ic"><use href="#i-addrow"/></svg></button>
        <button aria-label="添加行"><svg class="ic"><use href="#i-addrow"/></svg></button>
        <i class="sep"></i>
        <button aria-label="导出"><svg class="ic"><use href="#i-export"/></svg></button>
        <button aria-label="导入"><svg class="ic"><use href="#i-import"/></svg></button>
        <i class="sep"></i>
        <button aria-label="全部监视"><svg class="ic"><use href="#i-glasses"/></svg></button>
        <button aria-label="保持性"><svg class="ic"><use href="#i-retain"/></svg></button>
        <span class="grow"></span>
        <button aria-label="视图"><svg class="ic"><use href="#i-userview"/></svg></button>
      </div>
      <h3 class="table-title">默认变量表</h3>
      <div class="table-wrap">
        <table class="grid vars">
          <colgroup><col class="c-no"><col class="c-ic"><col class="c-name"><col class="c-type"><col class="c-addr"><col class="c-chk"><col class="c-chk"><col class="c-chk"><col class="c-chk"><col class="c-note"><col></colgroup>
          <thead><tr><th></th><th></th><th class="name-h">名称</th><th>数据类型</th><th>地址</th><th>保持</th><th>可从 ...</th><th>从 H...</th><th>在 H...</th><th class="hot">注释</th><th></th></tr></thead>
          <tbody id="vars"></tbody>
        </table>
      </div>
    </div>

    <div class="inspector">
      <div class="insp-head">
        <button class="tab t-prop"><svg class="ic"><use href="#i-prop"/></svg>属性</button>
        <button class="tab on t-info"><svg class="ic"><use href="#i-msg"/></svg>信息<svg class="ic last"><use href="#i-ybadge"/></svg></button>
        <button class="tab t-prop"><svg class="ic"><use href="#i-diag"/></svg>诊断</button>
        <div class="insp-btns"><svg class="wb"><use href="#i-restore"/></svg><svg class="wb"><use href="#i-list"/></svg><svg class="wb"><use href="#i-tri"/></svg></div>
      </div>
      <div class="tabs insp-tabs">
        <button class="tab t-gen">常规<svg class="ic last"><use href="#i-ybadge"/></svg></button>
        <button class="tab t-ref">交叉引用</button>
        <button class="tab on t-comp">编译</button>
      </div>
      <div class="toolbar msg-tools">
        <button class="pressed" aria-label="错误"><svg class="ic"><use href="#i-err"/></svg></button>
        <button class="pressed" aria-label="警告"><svg class="ic"><use href="#i-warn"/></svg></button>
        <button class="pressed" aria-label="信息"><svg class="ic"><use href="#i-blueinfo"/></svg></button>
        <span class="combo msg-combo"><select aria-label="消息过滤"><option>显示所有消息</option></select><span class="drop"></span></span>
      </div>
      <table class="grid msgs">
        <colgroup><col class="m-1"><col class="m-2"><col class="m-3"><col class="m-4"><col class="m-4"><col class="m-5"><col class="m-6"><col class="m-7"><col></colgroup>
        <thead><tr><th class="dim">!</th><th>路径</th><th>说明</th><th>转至</th><th class="dim">?</th><th>错误</th><th>警告</th><th>时间</th><th></th></tr></thead>
        <tbody><tr><td colspan="9"></td></tr><tr><td colspan="9"></td></tr><tr><td colspan="9"></td></tr><tr><td colspan="9"></td></tr></tbody>
      </table>
    </div>
  </section>

  <section class="panel task-panel">
    <header class="panel-head gray"><h2 class="light">任务</h2>
      <svg class="wb"><use href="#i-restore"/></svg><svg class="wb"><use href="#i-cols"/></svg><svg class="wb"><use href="#i-right"/></svg></header>
    <div class="options"><h3>选项</h3></div>
    <div class="toolbar task-tools"><span class="grow"></span><button aria-label="面板"><svg class="ic"><use href="#i-panel"/></svg></button></div>
    <div class="fold"><button aria-label="折叠"><svg class="chev"><use href="#i-chev"/></svg></button><h3>查找和替换</h3></div>
    <div class="find">
      <form class="find-body">
        <label class="cap" for="q">查找：</label>
        <span class="combo find-combo"><input id="q" type="text"><span class="drop"></span></span>
        <div class="checks">
          <label class="off"><input type="checkbox" disabled>全字匹配</label>
          <label><input type="checkbox">区分大小写</label>
          <label class="off"><input type="checkbox" disabled>在子结构中查找</label>
          <label class="off"><input type="checkbox" disabled>在隐藏文本中查找</label>
          <label class="off"><input type="checkbox" disabled>使用通配符</label>
          <label class="off"><input type="checkbox" disabled>使用正则表达式</label>
        </div>
        <div class="checks">
          <label><input type="radio" name="dir" checked>向下</label>
          <label><input type="radio" name="dir">向上</label>
        </div>
        <button class="btn" type="button" disabled>查找</button>
        <label class="cap second" for="r">替换为：</label>
        <span class="combo find-combo"><input id="r" type="text"><span class="drop"></span></span>
        <div class="checks tight">
          <label class="off"><input type="radio" name="scope" checked disabled>整个文档</label>
          <label class="off"><input type="radio" name="scope" disabled>从当前位置开始</label>
          <label class="off"><input type="radio" name="scope" disabled>选择</label>
        </div>
        <div class="pair"><button class="btn" type="button" disabled>替换</button><button class="btn" type="button" disabled>全部替换</button></div>
      </form>
      <div class="vbar"><button aria-label="向上滚动"><svg class="chev up"><use href="#i-chev"/></svg></button><div class="thumb"><svg class="grip turn"><use href="#i-grip"/></svg></div><button aria-label="向下滚动"><svg class="chev"><use href="#i-chev"/></svg></button></div>
    </div>
    <div class="hbar hbar-find"><button aria-label="向左滚动"><svg class="chev west"><use href="#i-chev"/></svg></button><div class="thumb"><svg class="grip"><use href="#i-grip"/></svg></div><button aria-label="向右滚动"><svg class="chev side"><use href="#i-chev"/></svg></button></div>
    <div class="fold"><button aria-label="折叠"><svg class="chev"><use href="#i-chev"/></svg></button><h3>语言和资源</h3></div>
    <form class="lang">
      <label class="cap" for="el">编辑语言：</label>
      <div class="lang-row"><span class="combo"><select id="el"><option>中文（中华人民共和国）</option></select><span class="drop"></span></span><button class="btn add" type="button" aria-label="添加语言"><svg class="ic"><use href="#i-add"/></svg></button></div>
      <hr>
      <label class="cap" for="rl">参考语言：</label>
      <span class="combo ref"><select id="rl"><option>中文（中华人民共和国）</option></select><span class="drop"></span></span>
      <textarea aria-label="参考文本" readonly></textarea>
    </form>
    <div class="hbar"><button aria-label="向左滚动"><svg class="chev west"><use href="#i-chev"/></svg></button><div class="thumb wide"><svg class="grip"><use href="#i-grip"/></svg></div><button aria-label="向右滚动"><svg class="chev side"><use href="#i-chev"/></svg></button></div>
  </section>

  <aside class="rail rail-right">
    <button class="vtab on"><svg class="ic"><use href="#i-task"/></svg><span>任务</span></button>
    <button class="vtab"><svg class="ic"><use href="#i-book"/></svg><span>库</span></button>
  </aside>
</main>

<footer class="statusbar">
  <a class="portal" href="#"><svg class="wb"><use href="#i-left"/></svg>Portal 视图</a>
  <button class="win"><svg class="ic"><use href="#i-over"/></svg>总览</button>
  <button class="win on"><svg class="ic"><use href="#i-tagok"/></svg>默认变量表</button>
  <span class="grow"></span>
  <button class="traybtn" aria-label="窗口布局"><svg class="ic"><use href="#i-tray"/></svg></button>
  <p class="state"><svg class="ic"><use href="#i-okball"/></svg>项目 9.23南北红绿灯 已打开。</p>
</footer>

<div class="taskbar">
  <div class="apps">
    <button aria-label="开始"><svg class="app"><use href="#i-win"/></svg></button>
    <label class="pill"><svg class="ic"><use href="#i-mag"/></svg><input type="text" placeholder="搜索" aria-label="搜索"><svg class="bear"><use href="#i-bear"/></svg></label>
    <button aria-label="任务视图"><svg class="app"><use href="#i-tview"/></svg></button>
    <button aria-label="QQ"><svg class="app"><use href="#i-qq"/></svg></button>
    <button class="live" aria-label="Edge"><svg class="app"><use href="#i-edge"/></svg></button>
    <button aria-label="文件资源管理器"><svg class="app"><use href="#i-files"/></svg></button>
    <button aria-label="监视器"><svg class="app"><use href="#i-mon"/></svg></button>
    <button class="live" aria-label="微信"><svg class="app"><use href="#i-wechat"/></svg></button>
    <button class="live active" aria-label="TIA Portal"><span class="tia">TIA<br>V15.1</span></button>
    <button class="live blank" aria-label="后台应用"></button>
  </div>
  <div class="systray">
    <svg class="chev up"><use href="#i-chev"/></svg><span class="ime">英</span><span class="ime">拼</span>
    <span class="trio"><svg class="ic"><use href="#i-wifi"/></svg><svg class="ic"><use href="#i-vol"/></svg><svg class="ic"><use href="#i-bat"/></svg></span>
    <time>10:58<br>2024/10/22</time><svg class="ic"><use href="#i-bell"/></svg>
  </div>
  <span class="mark">CSDN @zl1047333369</span>
</div>
<script src="app.js"></script>
</body>
</html>
```

FILE: styles.css
```css
* { box-sizing: border-box; }
body {
  margin: 0;
  min-height: 100vh;
  display: flex;
  flex-direction: column;
  background: #1c1c1c;
  color: #000;
  font: 18px/24px "Noto Sans", "Noto Sans CJK SC", sans-serif;
}
h1, h2, h3, p, ul, hr { margin: 0; padding: 0; }
button, input, select, textarea { font: inherit; color: inherit; margin: 0; }
button { border: 0; padding: 0; background: none; display: flex; align-items: center; }
a { color: inherit; text-decoration: none; }
svg { display: block; flex: none; }
.defs { position: absolute; }
.ic { width: 24px; height: 24px; }
.half { width: 12px; height: 24px; }
.wb { width: 18px; height: 18px; }
.chev { width: 20px; height: 20px; }
.up { transform: rotate(180deg); }
.west { transform: rotate(90deg); }
.side { transform: rotate(-90deg); }
.grow { flex: 1; }

/* title bar */
.titlebar {
  display: flex;
  align-items: center;
  gap: 8px;
  height: 34px;
  padding: 0 7px 0 9px;
  color: #fff;
  background: linear-gradient(#8a8a8a, #5a5a5a 10px, #1c1c1c 11px);
  border-bottom: 1px solid #000;
}
.titlebar h1 { flex: 1; font-size: 21px; line-height: 32px; font-weight: 500; }
.tia {
  width: 36px;
  height: 36px;
  color: #fff;
  background: linear-gradient(#1d2638, #56688c);
  font: 12px/17px "Noto Sans", sans-serif;
  text-align: center;
  white-space: nowrap;
}
.tia::first-line { font-size: 18px; }
.tia-small { width: 24px; height: 24px; font-size: 8px; line-height: 12px; }
.tia-small::first-line { font-size: 11px; }
.winbtns { display: flex; gap: 6px; }
.winbtns .wb { width: 17px; height: 17px; }

/* menu and toolbar */
.ribbon {
  display: flex;
  justify-content: space-between;
  height: 76px;
  background: #cbcbcb;
  border-bottom: 2px solid #5d6270;
}
.menu { display: flex; gap: 26px; padding: 9px 17px 0; }
.toolbar { display: flex; align-items: center; gap: 11px; }
.main-tools { padding: 4px 20px 0; height: 38px; font-size: 19px; }
.main-tools button { gap: 8px; white-space: nowrap; }
.main-tools .split { gap: 6px; }
.off { color: #8b8b8b; }
.sep { width: 0; align-self: stretch; border-left: 2px dotted #999; margin: 2px -1px; }
.search { width: 180px; height: 28px; border: 2px solid #8f8f8f; background: #fff; padding: 0 4px; }
.search::placeholder { color: #777; opacity: 1; }
.brand { display: flex; flex-direction: column; align-items: flex-end; padding: 20px 35px 0 0; font-size: 21px; line-height: 24px; font-weight: 500; }
.brand span { margin-right: 36px; }
.brand b { font-size: 26px; line-height: 20px; font-weight: 600; color: #6c6c6c; }

/* work area */
.work { flex: 1; display: grid; grid-template-columns: 36px 363px 1fr 302px 35px; }
.rail { background: #b0b0b0; }
.rail-left { border-right: 2px solid #3a4052; display: flex; flex-direction: column; background: linear-gradient(#f4f4f4, #f4f4f4) 0 37px / 100% 2px no-repeat, linear-gradient(#f4f4f4, #f4f4f4) 0 368px / 100% 2px no-repeat, #b0b0b0; }
.rail-left span { writing-mode: vertical-rl; text-orientation: sideways; transform: rotate(180deg); color: #fff; font-weight: 600; font-size: 20px; line-height: 32px; padding-bottom: 162px; }
.panel, .editor, .inspector { display: flex; flex-direction: column; min-width: 0; background: #e9e9e9; }
.tree-panel { border-right: 4px solid #1d2333; }
.panel-head { display: flex; align-items: center; gap: 9px; height: 41px; padding: 0 9px; border-bottom: 4px solid #f2f2f2; color: #fff; white-space: nowrap; }
.panel-head h2 { flex: 1; display: flex; align-items: center; gap: 15px; font-size: 21px; line-height: 30px; font-weight: 600; }
.panel-head h2 svg { width: 8px; height: 12px; }
.panel-head.gray { background: #b0b0b0; }
.panel-head.gray h2 { font-size: 22px; }
.panel-head.gray h2.light { font-weight: 500; }
.panel-head.navy { background: #2c334c; }
.tabs { display: flex; align-items: flex-end; gap: 2px; height: 37px; padding: 0 9px; background: linear-gradient(#808080, #808080) 0 100% / 100% 2px no-repeat, #cbcbcb; }
.tabs.end { justify-content: flex-end; }
.tab {
  height: 32px;
  gap: 4px;
  padding: 0 4px 2px;
  border: 2px solid #808080;
  background: linear-gradient(#dedede, #cacaca);
  color: #5c5c5c;
  font-size: 22px;
  line-height: 26px;
  font-weight: 500;
  white-space: nowrap;
}
.tab.on { color: #000; font-weight: 700; background: linear-gradient(#f8f8f8, #e9e9e9); border-bottom-color: #e9e9e9; }
.tab .last { margin-left: auto; }
.tree-panel .tab { padding: 0 30px 2px 16px; }
.tree-panel .toolbar, .edit-tools, .task-tools, .msg-tools { height: 41px; padding: 0 9px; }
.toolbar.edit-tools { padding-right: 23px; }
.pressed { width: 33px; height: 33px; justify-content: center; background: #fff; border: 2px solid #4a7be0; border-radius: 2px; }
.tree-panel .tree-tools { gap: 7px; padding-right: 14px; }

/* project tree */
.tree-cap { height: 32px; background: #c3c3c3; }
.tree { flex: 1; list-style: none; display: grid; grid-auto-rows: 28px 29px; align-content: start; overflow: hidden; background: #f0f0f0; }
.tree li { display: flex; border-bottom: 2px solid #fdfdfd; background: #f0f0f0; min-width: 0; }
.tree li.dark { background: #e0e0e0; }
.tree li.sel { background: #d5dade; }
.node { display: flex; align-items: center; width: 329px; border-right: 2px solid #cdcdcd; white-space: nowrap; padding-left: 7px; }
.sel .node { outline: 2px dotted #8c8c8c; outline-offset: -2px; }
.l1 .node { padding-left: 34px; }
.l2 .node { padding-left: 61px; }
.l3 .node { padding-left: 88px; }
.node .stack { display: grid; width: 24px; height: 24px; margin-right: 6px; }
.node .stack svg { grid-area: 1 / 1; }
.arrow { width: 13px; height: 13px; margin-right: 8px; }
.arrow::before { content: ""; display: block; width: 13px; height: 13px; }
.arrow.open::before { background: #000; clip-path: polygon(0 20%, 100% 20%, 50% 80%); }
.arrow.shut::before { background: #000; clip-path: polygon(25% 0, 75% 50%, 25% 100%); }
.node.latin { font-size: 17px; font-weight: 500; }
.node.bold { font-weight: 700; }
.node.semi { font-size: 17px; font-weight: 600; }
.fold { display: flex; height: 36px; border-top: 4px solid #9a9a9a; background: linear-gradient(#ececec, #d4d4d4); border-bottom: 2px solid #808080; }
.fold button { width: 31px; justify-content: center; border-right: 2px solid #808080; }
.fold h3 { padding-left: 6px; font-size: 22px; line-height: 30px; font-weight: 700; }
.detail { border-top-color: #1d2333; }

/* tables */
.center { display: grid; grid-template-rows: 1fr 277px; min-width: 0; min-height: 0; }
.table-title { height: 33px; padding-left: 37px; background: #d8d8d8; font-size: 22px; line-height: 31px; font-weight: 700; }
.table-wrap { flex: 1 1 0; min-height: 0; overflow: hidden; background: #f0f0f0; }
.grid { width: 100%; table-layout: fixed; border-collapse: separate; border-spacing: 0; background: #f0f0f0; }
.grid th {
  height: 28px;
  padding: 0 0 0 5px;
  border: solid #adadad;
  border-width: 2px 2px 2px 0;
  background: linear-gradient(#ececec, #cfcfcf 60%, #dedede);
  font-weight: 400;
  font-size: 18px;
  line-height: 22px;
  text-align: left;
  white-space: nowrap;
}
.grid th.hot { background: linear-gradient(#f0f2f4, #d6dbe2 60%, #e4e9ee); }
.grid th.dim { padding-left: 8px; color: #777; font-size: 16px; }
.grid td { height: 28px; padding: 0 0 0 5px; border: solid #fdfdfd; border-width: 0 2px 2px 0; font-size: 17px; line-height: 24px; white-space: nowrap; }
.grid tr:nth-child(even) td { height: 29px; }
.vars .cn td:nth-child(3) { font-size: 18px; }
.vars td:nth-child(1) { background: #c9c9c9; border-right-color: #adadad; color: #777; }
.vars td:nth-child(2) { padding: 0 0 0 2px; }
.vars td:nth-child(3) { padding-left: 35px; border-right-color: #cdcdcd; }
.vars td:nth-child(n+6):nth-child(-n+9) { padding: 0; }
.vars td:nth-child(6), .vars .new td:nth-child(n+6):nth-child(-n+9) { background: #e0e0e0; }
.vars tr.blank td { background: #f0f0f0; }
.vars tr.blank td:nth-child(1) { background: #c9c9c9; }
.vars td:nth-child(2) { background: #e6e6e6; }
.vars .new td:nth-child(2) { background: #f0f0f0; }
.vars .new td:nth-child(3) { color: #8b8b8b; }
.vars td input[type=checkbox] { margin: 0 auto; }
.vars td:nth-child(6) input[type=checkbox] { margin: 0 0 0 13px; }
.vars .name-h { padding-left: 7px; }
.vars .cur td:nth-child(1) { background: #c3cfdb; }
.c-no { width: 56px; } .c-ic { width: 29px; } .c-name { width: 301px; } .c-type { width: 149px; }
.c-addr { width: 150px; } .c-chk { width: 75px; } .c-note { width: 360px; }
.m-1 { width: 43px; } .m-2 { width: 297px; } .m-3 { width: 526px; } .m-4 { width: 76px; }
.m-5 { width: 81px; } .m-6 { width: 105px; } .m-7 { width: 120px; }
.cell { display: flex; justify-content: space-between; align-items: center; }
.cell button { width: 25px; height: 25px; justify-content: center; border: 2px solid #808080; border-radius: 2px; background: linear-gradient(#fafafa, #d0d0d0); }
.cell .ic { width: 22px; height: 22px; }
.vars .cur td.edit { padding: 0; position: relative; }
.edit input { display: block; width: 100%; height: 28px; border: 2px solid #4a7be0; background: #fff; padding: 0 4px; outline: 0; }
.edit::after { content: ""; position: absolute; right: -2px; bottom: -2px; width: 7px; height: 7px; background: #2f62d8; border: 1px solid #fff; }

/* tick boxes and radios */
input[type=checkbox], input[type=radio] {
  appearance: none;
  display: block;
  flex: none;
  width: 22px;
  height: 22px;
  border: 2px solid #767676;
  border-radius: 4px;
  background: linear-gradient(#fff, #d6dadc 50%, #f4f4f4);
}
input[type=radio] { border-radius: 50%; }
input:disabled[type=checkbox], input:disabled[type=radio] { border-color: #bcbcbc; background: linear-gradient(#f6f6f6, #e8e8e8 50%, #f8f8f8); }
input[type=checkbox]:checked { border-color: #4c5a68; border-top-color: #2b55b4; background: linear-gradient(#f2f4ff, #a8c4f0 35%, #3aa4dc 65%, #5cf4f8); }
input[type=checkbox]:checked:disabled { border-color: #808080; background: linear-gradient(#fdfdfd, #ececec); }
input[type=checkbox]:checked::before { content: ""; display: block; width: 18px; height: 18px; background: #0a4a9c; clip-path: polygon(8% 38%, 26% 42%, 40% 58%, 72% 14%, 92% 14%, 44% 88%, 32% 84%); }
input[type=checkbox]:checked:disabled::before { background: #666; }
input[type=radio]:checked { border-color: #35608c; background: radial-gradient(circle, #0a4a9c 0 3px, transparent 5px), linear-gradient(#e4ecff, #7cc0f0 50%, #4cecf4); }
input[type=radio]:checked:disabled { border-color: #bcbcbc; background: radial-gradient(circle, #a4a4a4 0 3px, transparent 5px), #f0f0f0; }

/* inspector */
.inspector { border-top: 4px solid #1d2333; overflow: hidden; background: #f0f0f0; }
.insp-head { display: flex; align-items: flex-end; justify-content: flex-end; gap: 2px; flex: none; height: 41px; padding: 0 8px 5px 0; background: linear-gradient(#f2f2f2, #f2f2f2) 0 100% / 100% 5px no-repeat, #b0b0b0; }
.insp-head .tab { height: 31px; border-bottom: 0; }
.insp-btns { display: flex; gap: 9px; width: 102px; justify-content: flex-end; padding-bottom: 10px; color: #fff; }
.t-var { width: 109px; } .t-const { width: 157px; } .t-prop { width: 112px; } .t-info { width: 120px; }
.t-gen { width: 106px; padding-left: 16px; } .t-ref { width: 143px; padding-left: 15px; } .t-comp { width: 94px; padding-left: 14px; }
.tabs, .toolbar, .panel-head, .fold, .table-title { flex: none; }
.toolbar.msg-tools { background: #e9e9e9; gap: 3px; padding: 0 6px 2px; }
.msgs { margin-top: 29px; }
.combo { display: flex; height: 28px; border: 2px solid #909090; background: #fff; }
.combo input, .combo select { flex: 1; min-width: 0; border: 0; background: #fff; appearance: none; padding: 0 5px; line-height: 24px; outline: 0; }
.drop { width: 25px; border-left: 2px solid #909090; background: linear-gradient(#f4f4f4, #cfcfcf); display: grid; place-items: center; flex: none; }
.drop::before, .cell .dd::before { content: ""; width: 12px; height: 7px; background: #000; clip-path: polygon(0 0, 100% 0, 50% 100%); }
.msg-combo { width: 299px; margin: 3px 0 0 4px; }

/* task card */
.task-panel { border: solid #1d2333; border-width: 0 2px 0 4px; overflow: hidden; }
.options { height: 37px; padding-left: 6px; background: linear-gradient(#e2e2e2, #f2f2f2 40%, #e6e6e6); border-bottom: 2px solid #909090; flex: none; }
.options h3 { font-size: 22px; line-height: 36px; font-weight: 700; }
.find { flex: 1 1 0; min-height: 0; display: grid; grid-template-columns: 1fr 27px; overflow: hidden; }
.find-body { padding: 28px 0 0 18px; min-width: 0; overflow: hidden; }
.cap { display: block; padding-left: 4px; }
.find-combo { width: 261px; height: 26px; margin: 3px 0 10px; }
.checks { display: flex; flex-direction: column; margin-bottom: 11px; }
.checks label { display: flex; align-items: center; gap: 6px; height: 36px; white-space: nowrap; }
.checks + .btn { margin-top: -7px; }
.tight { margin: 0 0 5px; }
.second { margin-top: 28px; }
.btn { width: 276px; height: 29px; justify-content: center; border: 2px solid #949494; border-radius: 2px; background: linear-gradient(#fafafa, #d8d8d8 50%, #ececec); white-space: nowrap; }
.btn:disabled { color: #8b8b8b; }
.pair { display: flex; gap: 9px; }
.pair .btn { width: 135px; flex: none; }
.vbar { display: flex; flex-direction: column; gap: 2px; background: #c3c3c3; }
.vbar button, .hbar button, .thumb { width: 26px; height: 27px; flex: none; display: flex; justify-content: center; align-items: center; color: #555; border: 2px solid #949494; background: linear-gradient(#f4f4f4, #dedede); }
.vbar .thumb { flex: 1; margin-bottom: 9px; background: linear-gradient(90deg, #f0f0f0, #d0d0d0); }
.grip { width: 14px; height: 14px; }
.turn { transform: rotate(90deg); }
.hbar { display: flex; flex: none; height: 27px; gap: 3px; background: #c3c3c3; }
.hbar .thumb { flex: 1; margin-right: 20px; }
.hbar .wide { margin-right: 15px; }
.hbar-find { padding-right: 27px; }
.lang { padding: 21px 0 0 18px; flex: none; }
.lang-row { display: flex; gap: 10px; margin: 10px 0 17px; }
.lang-row .combo { width: 240px; flex: none; }
.lang .add { width: 34px; flex: none; }
.lang hr { border: 0; border-top: 2px solid #a8a8a8; margin: 0 0 19px -18px; }
.ref { margin: 9px 0 11px; }
.lang textarea { display: block; width: 290px; height: 109px; margin-bottom: 19px; border: 2px solid #949494; background: #e9e9e9; resize: none; }

/* right rail */
.rail-right { display: flex; flex-direction: column; gap: 4px; padding-top: 46px; }
.vtab { flex-direction: column; gap: 6px; width: 31px; height: 86px; padding-top: 2px; border: 2px solid #808080; border-left: 0; background: linear-gradient(90deg, #dedede, #cacaca); color: #555; }
.vtab.on { height: 110px; background: linear-gradient(90deg, #e9e9e9, #f8f8f8); color: #000; font-weight: 700; }
.vtab span { writing-mode: vertical-rl; text-orientation: sideways; font-size: 22px; line-height: 26px; }

/* status bar */
.statusbar { display: flex; align-items: flex-start; height: 43px; padding-top: 5px; background: #1c1c1c; color: #fff; font-size: 19px; line-height: 30px; }
.portal { display: flex; align-items: center; gap: 12px; width: 271px; padding-left: 49px; font-size: 21px; font-weight: 600; }
.win { width: 170px; height: 31px; margin-right: 4px; padding-left: 5px; gap: 6px; background: linear-gradient(90deg, #c4c4c4, #b4b4b4); color: #000; }
.win.on { background: #fff; font-weight: 700; font-size: 21px; }
.traybtn { width: 30px; height: 31px; justify-content: center; background: #c8c8c8; margin-right: 9px; }
.state { display: flex; align-items: center; gap: 7px; width: 495px; padding-left: 5px; border-left: 1px solid #666; font-size: 20px; }

/* taskbar */
.taskbar { position: relative; display: grid; grid-template-columns: 1fr auto; height: 73px; border-top: 3px solid #b4b4c0; background: linear-gradient(90deg, #e4ebf8, #e2def2 45%, #e0e2f2 60%, #dde6f6); }
.apps { display: flex; align-items: center; gap: 16px; padding: 0 0 3px 622px; }
.apps button { position: relative; width: 50px; height: 60px; justify-content: center; border-radius: 6px; }
.app { width: 36px; height: 36px; }
.apps .active { background: #f4f2fc; border: 1px solid #d4d2e0; }
.live::after { content: ""; position: absolute; left: 50%; bottom: 1px; width: 8px; height: 5px; margin-left: -4px; border-radius: 3px; background: #7c7c88; }
.active::after { width: 18px; margin-left: -9px; background: #0a78d4; }
.pill { display: flex; align-items: center; gap: 12px; width: 322px; height: 46px; padding: 0 4px 0 14px; border: 1px solid #d0cee0; border-radius: 23px; background: #f8f7fd; }
.pill input { flex: 1; min-width: 0; border: 0; background: none; font-size: 20px; outline: 0; }
.pill input::placeholder { color: #555; opacity: 1; }
.bear { width: 72px; height: 40px; }
.systray { display: flex; align-items: center; padding: 0 28px 3px 0; color: #111; }
.systray .chev { width: 18px; height: 18px; margin-right: 26px; }
.ime { width: 59px; font-size: 22px; }
.trio { display: flex; gap: 12px; margin-right: 24px; }
.systray time { width: 90px; margin-right: 14px; text-align: right; font-size: 17px; line-height: 24px; }
.mark { position: absolute; right: 4px; top: 10px; font-size: 41px; line-height: 44px; color: rgba(255, 255, 255, .6); text-shadow: 1px 1px 2px #777; white-space: nowrap; pointer-events: none; }
```

FILE: app.js
```js
// Project tree: level, arrow state, icon names, label, extra classes
const tree = [
  [0, 'open', 'i-page', '9.23南北红绿灯', 'dark'],
  [1, '', 'i-add', '添加新设备'],
  [1, '', 'i-net', '设备和网络'],
  [1, 'open', 'i-folder i-plc', 'PLC_1 [CPU 1214C DC/DC/DC]', 'dark', 'semi'],
  [2, '', 'i-config', '设备组态'],
  [2, '', 'i-diag', '在线和诊断'],
  [2, 'shut', 'i-folder o-block', '程序块'],
  [2, 'shut', 'i-folder o-gear', '工艺对象'],
  [2, 'shut', 'i-folder o-src', '外部源文件'],
  [2, 'open', 'i-folder o-tag', 'PLC 变量'],
  [3, '', 'i-tags', '显示所有变量'],
  [3, '', 'i-add', '添加新变量表'],
  [3, '', 'i-tagok', '默认变量表 [51]', 'sel'],
  [2, 'shut', 'i-folder o-type', 'PLC 数据类型'],
  [2, 'shut', 'i-folder o-watch', '监控与强制表'],
  [2, 'shut', 'i-folder o-backup', '在线备份'],
  [2, 'shut', 'i-folder o-trace', 'Traces', '', 'latin'],
  [2, 'shut', 'i-folder o-proxy', '设备代理数据'],
  [2, '', 'i-info', '程序信息'],
  [2, '', 'i-text', 'PLC 报警文本列表'],
  [2, 'shut', 'i-folder i-plc', '本地模块'],
  [1, 'shut', 'i-folder o-hmi', 'HMI_1 [KTP700 Basic PN]', 'dark', 'semi'],
  [1, 'shut', 'i-folder o-ungr', '未分组的设备', 'dark', 'bold'],
  [1, 'shut', 'i-folder o-sec', '安全设置', 'dark'],
  [1, 'shut', 'i-folder o-pub', '公共数据', 'dark'],
  [1, 'shut', 'i-folder o-doc', '文档设置', 'dark'],
  [1, 'shut', 'i-folder o-lang', '语言和资源', 'dark'],
  [0, 'shut', 'i-folder o-net2', '在线访问', 'dark'],
  [0, 'shut', 'i-folder o-card', '读卡器/USB 存储器', 'dark']
];
const use = (name) => `<svg class="ic"><use href="#${name}"/></svg>`;
document.getElementById('tree').innerHTML = tree.map(([level, arrow, icons, label, row = '', text = '']) =>
  `<li class="l${level} ${row}"><span class="node ${text}"><span class="arrow ${arrow}"></span>` +
  `<span class="stack">${icons.split(' ').map(use).join('')}</span>${label}</span></li>`
).join('') + '<li><span class="node"></span></li>'.repeat(7);

// PLC tags: name, data type, address
const tags = [
  ['System_Byte', 'Byte', '%MB1'], ['FirstScan', 'Bool', '%M1.0'], ['DiagStatusUpdate', 'Bool', '%M1.1'],
  ['AlwaysTRUE', 'Bool', '%M1.2'], ['AlwaysFALSE', 'Bool', '%M1.3'], ['Clock_Byte', 'Byte', '%MB0'],
  ['Clock_10Hz', 'Bool', '%M0.0'], ['Clock_5Hz', 'Bool', '%M0.1'], ['Clock_2.5Hz', 'Bool', '%M0.2'],
  ['Clock_2Hz', 'Bool', '%M0.3'], ['Clock_1.25Hz', 'Bool', '%M0.4'], ['Clock_1Hz', 'Bool', '%M0.5'],
  ['Clock_0.625Hz', 'Bool', '%M0.6'], ['Clock_0.5Hz', 'Bool', '%M0.7'], ['开始', 'Bool', '%I0.3'],
  ['暂停', 'Bool', '%I0.4'], ['绿灯1', 'Bool', '%Q0.6'], ['绿灯2', 'Bool', '%Q0.5'], ['黄灯1', 'Bool', '%Q0.4'],
  ['黄灯2', 'Bool', '%Q0.3'], ['红灯1', 'Bool', '%Q0.2'], ['红灯2', 'Bool', '%Q0.7'], ['启动', 'Bool', '%Q2.6'],
  ['北部', 'Bool', '%Q2.7'], ['东部', 'Bool', '%Q3.0'], ['&lt;新增&gt;', '', '']
];
const box = (label, attrs) => `<td><input type="checkbox" aria-label="${label}" ${attrs}></td>`;
document.getElementById('vars').innerHTML = tags.map(([name, type, addr], i) => {
  const current = i === 13, fresh = i === 25;
  const cls = [i > 13 ? 'cn' : '', current ? 'cur' : '', fresh ? 'new' : ''].join(' ');
  const state = fresh ? 'checked disabled' : 'checked';
  return `<tr class="${cls}"><td>${i + 1}</td><td>${fresh ? '' : use('i-tag')}</td><td>${name}</td>` +
    (current
      ? `<td><div class="cell">${type}<button aria-label="选择类型">${use('i-const')}</button></div></td>` +
        `<td><div class="cell">${addr}<button class="dd" aria-label="选择地址"></button></div></td>`
      : `<td>${type}</td><td>${addr}</td>`) +
    box('保持', 'disabled') + box('可访问', state) + box('可写', state) + box('可见', state) +
    (current ? '<td class="edit"><input type="text" aria-label="注释"></td>' : '<td></td>') + '<td></td></tr>';
}).join('') + `<tr class="blank">${'<td></td>'.repeat(11)}</tr>`;
```
